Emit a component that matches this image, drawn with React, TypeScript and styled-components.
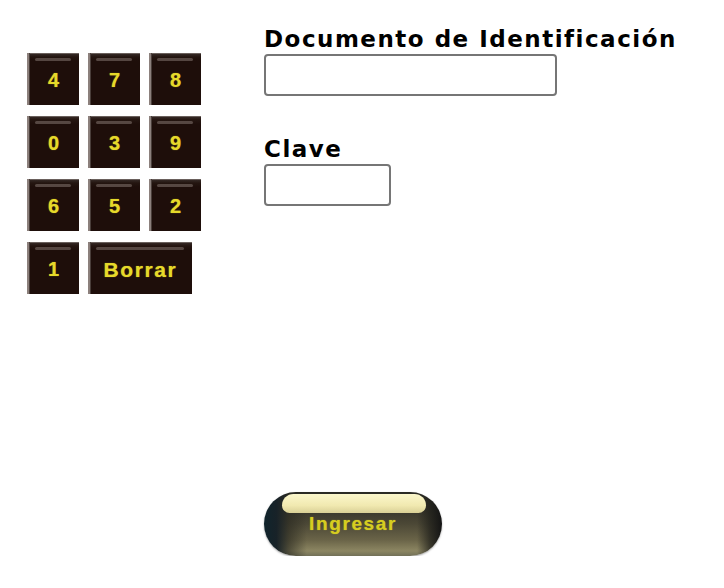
import React from "react";
import styled, { createGlobalStyle } from "styled-components";

const Global = createGlobalStyle`
  html, body { margin: 0; padding: 0; background: #ffffff; }
  body { font-family: "DejaVu Sans", Verdana, sans-serif; }
`;

const Page = styled.div`
  display: flex;
  align-items: flex-start;
  padding: 26px 0 0 27px;
  gap: 63px;
`;

const Keypad = styled.div`
  display: flex;
  flex-direction: column;
  gap: 11px;
  margin-top: 27px;
  width: 174px;
`;

const KeyRow = styled.div`
  display: flex;
  gap: 9px;
`;

const Key = styled.button<{ $wide?: boolean }>`
  position: relative;
  box-sizing: border-box;
  display: flex;
  align-items: center;
  justify-content: center;
  width: ${(p) => (p.$wide ? "104px" : "52px")};
  height: 52px;
  margin: 0;
  padding: 3px 0 0 1px;
  border: none;
  border-radius: 0;
  background: linear-gradient(to bottom, #3a2f2c 0px, #241510 4px, #1e0e0a 8px, #1e0e0a 100%);
  box-shadow: inset 2px 0 0 #8c807c, inset 3px 0 0 #4a3e3a, inset 0 1px 0 #6a605c;
  color: #e6d92a;
  font-family: "Liberation Sans", Arial, sans-serif;
  font-weight: bold;
  font-size: ${(p) => (p.$wide ? "21px" : "20px")};
  letter-spacing: ${(p) => (p.$wide ? "1.6px" : "0")};
  text-shadow: 0 0 1px rgba(230, 217, 42, 0.7);
  cursor: pointer;

  &::before {
    content: "";
    position: absolute;
    top: 5px;
    left: 8px;
    right: 8px;
    height: 3px;
    border-radius: 2px;
    background: rgba(140, 125, 120, 0.5);
  }
`;

const Form = styled.div`
  display: flex;
  flex-direction: column;
`;

const Label = styled.label`
  display: block;
  font-family: "DejaVu Sans", Verdana, sans-serif;
  font-weight: bold;
  font-size: 23px;
  letter-spacing: 1.5px;
  line-height: 27px;
  color: #000;
  margin-bottom: 1px;
`;

const Field = styled.input<{ $w: number; $mb?: number }>`
  box-sizing: border-box;
  width: ${(p) => p.$w}px;
  height: 42px;
  border: 2px solid #767676;
  border-radius: 4px;
  background: #fff;
  padding: 0 6px;
  margin: 0 0 ${(p) => p.$mb ?? 0}px 0;
  font-size: 18px;
  outline: none;
`;

const Submit = styled.button`
  position: relative;
  box-sizing: border-box;
  width: 178px;
  height: 64px;
  margin-top: 286px;
  border: none;
  padding: 0;
  border-radius: 32px;
  overflow: hidden;
  background: linear-gradient(to right, #10242c 0%, #182228 7%, rgba(40, 40, 32, 0.6) 14%, rgba(0, 0, 0, 0) 24%, rgba(0, 0, 0, 0) 86%, rgba(30, 30, 26, 0.7) 93%, #141414 100%),
    linear-gradient(to bottom, #2a2a24 0%, #3a382c 30%, #4c4836 50%, #6a6448 75%, #8c8662 92%, #727058 100%);
  box-shadow: 0 1px 2px rgba(0, 0, 0, 0.35);
  color: #d6cd20;
  font-family: "Liberation Sans", Arial, sans-serif;
  font-weight: bold;
  font-size: 19px;
  letter-spacing: 1.6px;
  text-shadow: 0 0 1px rgba(214, 205, 32, 0.7);
  cursor: pointer;

  &::before {
    content: "";
    position: absolute;
    top: 2px;
    left: 18px;
    right: 16px;
    height: 19px;
    border-radius: 12px 12px 8px 8px;
    background: linear-gradient(to bottom, #fbf7cc 0%, #f1e9b0 60%, #d9d096 100%);
    z-index: 0;
  }

  span {
    position: relative;
    z-index: 1;
  }
`;

const rows: string[][] = [
  ["4", "7", "8"],
  ["0", "3", "9"],
  ["6", "5", "2"],
];

export default function App() {
  return (
    <>
      <Global />
      <Page>
        <Keypad>
          {rows.map((r, i) => (
            <KeyRow key={i}>
              {r.map((d) => (
                <Key key={d}>{d}</Key>
              ))}
            </KeyRow>
          ))}
          <KeyRow>
            <Key>1</Key>
            <Key $wide>Borrar</Key>
          </KeyRow>
        </Keypad>
        <Form>
          <Label>Documento de Identificación</Label>
          <Field $w={293} $mb={40} />
          <Label>Clave</Label>
          <Field $w={127} type="password" />
          <Submit>
            <span>Ingresar</span>
          </Submit>
        </Form>
      </Page>
    </>
  );
}
